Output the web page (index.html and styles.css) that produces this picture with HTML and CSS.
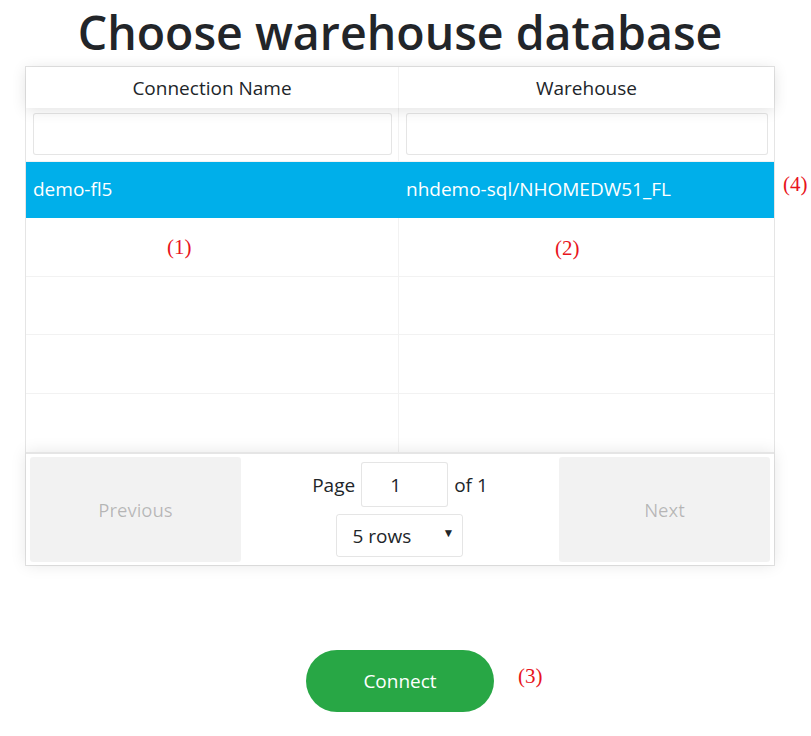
FILE: index.html
```html
<!DOCTYPE html>
<html>
<head>
<meta charset="utf-8">
<link rel="stylesheet" href="styles.css">
</head>
<body>
<div class="page">
  <h1 class="title">Choose warehouse database</h1>
  <div class="table">
    <div class="thead">
      <div class="th">Connection Name</div>
      <div class="th">Warehouse</div>
    </div>
    <div class="filters">
      <div class="fcell"><input class="finput" type="text"></div>
      <div class="fcell"><input class="finput" type="text"></div>
    </div>
    <div class="tbody">
      <div class="tr selected">
        <div class="td">demo-fl5</div>
        <div class="td">nhdemo-sql/NHOMEDW51_FL</div>
        <span class="note note4">(4)</span>
      </div>
      <div class="tr empty">
        <div class="td"><span class="note note1">(1)</span></div>
        <div class="td"><span class="note note2">(2)</span></div>
      </div>
      <div class="tr empty"><div class="td"></div><div class="td"></div></div>
      <div class="tr empty"><div class="td"></div><div class="td"></div></div>
      <div class="tr empty last"><div class="td"></div><div class="td"></div></div>
    </div>
    <div class="pagination">
      <button class="pbtn">Previous</button>
      <div class="pcenter">
        <div class="pageinfo">
          <span>Page</span>
          <input class="pageinput" type="text" value="1">
          <span>of 1</span>
        </div>
        <div class="rowsel">
          <span>5 rows</span>
          <span class="caret">▼</span>
        </div>
      </div>
      <button class="pbtn">Next</button>
    </div>
  </div>
  <div class="actions">
    <button class="connect">Connect</button>
    <span class="note note3">(3)</span>
  </div>
</div>
</body>
</html>
```

FILE: styles.css
```css
* { box-sizing: border-box; }
body {
  margin: 0;
  font-family: "Open Sans", "Noto Sans", sans-serif;
  color: #212529;
  background: #fff;
}
.page {
  width: 750px;
  margin-left: 25px;
}
.title {
  margin: 0;
  height: 66px;
  text-align: center;
  font-size: 46.5px;
  font-weight: 600;
  line-height: 64px;
  color: #222529;
  white-space: nowrap;
}
.table {
  border: 1px solid rgba(0,0,0,0.1);
  position: relative;
}
.thead {
  display: grid;
  grid-template-columns: 373px 1fr;
  height: 41px;
  box-shadow: 0 2px 15px 0 rgba(0,0,0,0.12);
  position: relative;
  z-index: 1;
}
.th {
  display: flex;
  align-items: center;
  justify-content: center;
  font-size: 19px;
  border-right: 1px solid rgba(0,0,0,0.05);
  padding-top: 1px;
}
.th:last-child { border-right: 0; }
.filters {
  display: grid;
  grid-template-columns: 373px 1fr;
  height: 54px;
  border-bottom: 1px solid rgba(0,0,0,0.05);
}
.fcell {
  padding: 5px 6px 0 7px;
  border-right: 1px solid rgba(0,0,0,0.05);
}
.fcell:last-child { border-right: 0; }
.finput {
  display: block;
  width: 100%;
  height: 42px;
  border: 1px solid rgba(0,0,0,0.1);
  border-radius: 3px;
  background: #fff;
  outline: none;
}
.tr {
  display: grid;
  grid-template-columns: 373px 1fr;
  position: relative;
  border-bottom: 1px solid rgba(0,0,0,0.05);
}
.tr.selected {
  height: 56px;
  background: #00afea;
  color: #fff;
  border-bottom: 0;
}
.tr.empty { height: 58.5px; }
.tr.last { border-bottom: 0; }
.td {
  display: flex;
  align-items: center;
  padding: 0 7px;
  font-size: 19px;
  border-right: 1px solid rgba(0,0,0,0.05);
  position: relative;
  padding-bottom: 3px;
}
.td:last-child { border-right: 0; }
.selected .td { border-right: 0; }
.note {
  position: absolute;
  font-family: "Liberation Serif", serif;
  font-size: 21px;
  color: #e8141c;
  line-height: 1;
}
.note1 { left: 141px; top: 19px; }
.note2 { left: 156px; top: 20px; }
.note4 { left: 757px; top: 12px; }
.note3 { left: 493px; top: 16px; }
.pagination {
  display: flex;
  justify-content: space-between;
  align-items: stretch;
  border-top: 2px solid rgba(0,0,0,0.1);
  box-shadow: 0 0 15px 0 rgba(0,0,0,0.1);
  padding: 3px 4px;
  height: 113px;
}
.pbtn {
  width: 211px;
  border: 0;
  border-radius: 3px;
  background: rgba(0,0,0,0.05);
  color: rgba(0,0,0,0.25);
  font-family: inherit;
  font-size: 18.5px;
  padding-top: 0;
}
.pcenter {
  display: flex;
  flex-direction: column;
  align-items: center;
  padding-top: 5px;
  gap: 7px;
}
.pageinfo {
  display: flex;
  align-items: center;
  gap: 6px;
  font-size: 19px;
}
.pageinput {
  width: 87px;
  height: 45px;
  border: 1px solid rgba(0,0,0,0.1);
  border-radius: 3px;
  text-align: center;
  padding: 0 18px 0 0;
  font-family: inherit;
  font-size: 19px;
  color: #212529;
  outline: none;
}
.rowsel {
  width: 127px;
  height: 43px;
  border: 1px solid rgba(0,0,0,0.1);
  border-radius: 3px;
  display: flex;
  align-items: center;
  justify-content: space-between;
  padding: 0 8px 0 15px;
  font-size: 19px;
}
.caret {
  font-size: 12px;
  margin-top: -6px;
}
.actions {
  position: relative;
  display: flex;
  justify-content: center;
  margin-top: 84px;
}
.connect {
  width: 188px;
  height: 62px;
  border: 0;
  border-radius: 31px;
  background: #28a745;
  color: #fff;
  font-family: inherit;
  font-size: 19px;
}
```
